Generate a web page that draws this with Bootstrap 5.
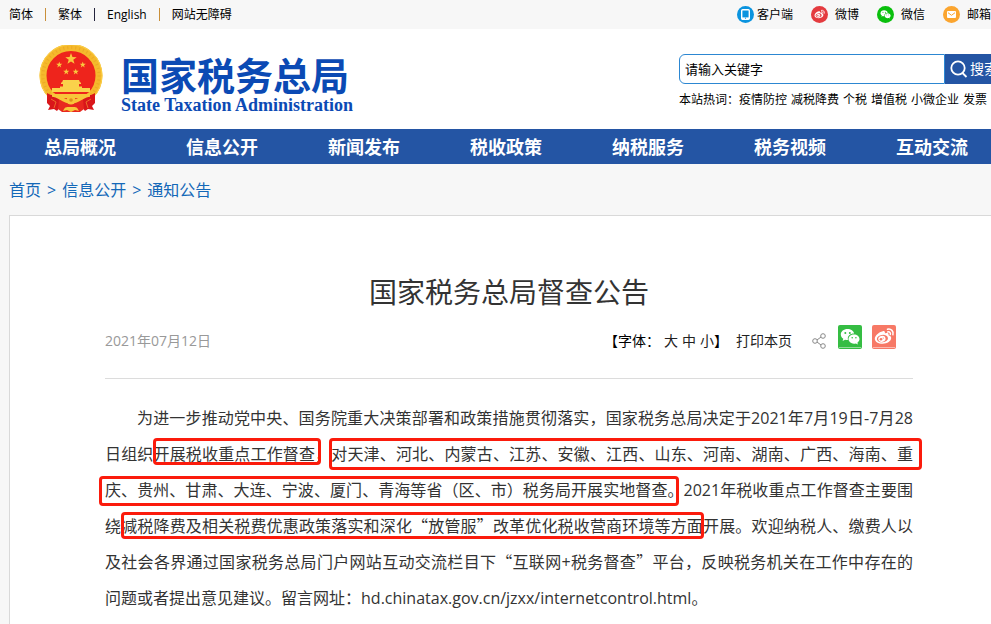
<!DOCTYPE html>
<html lang="zh-CN">
<head>
<meta charset="utf-8">
<meta name="viewport" content="width=device-width, initial-scale=1">
<title>国家税务总局督查公告</title>
<link href="https://cdn.jsdelivr.net/npm/bootstrap@5.3.0/dist/css/bootstrap.min.css" rel="stylesheet">
<style>
  body { font-family: "Open Sans", "Noto Sans CJK SC", sans-serif; background: #f7f7f7; color: #333; overflow-x: hidden; }
  a { color: inherit; text-decoration: none; }
  .shell { width: calc(100% - 18px); min-width: 1000px; max-width: 1000px; margin-left: 9px; }
  @media (min-width: 1020px) { .shell { margin-left: auto; margin-right: auto; } }
  .util { font-size: 12px; line-height: 29px; color: #000; }
  .util-links { gap: 12px; }
  .bar { width: 1px; height: 13px; background: #c98f3a; }
  .bar-dark { background: #23233c; }
  .util-apps { gap: 18px; padding-right: 18px; }
  .util-apps a { gap: 7px; }
  .util-apps a:first-child { gap: 3px; }
  .masthead { height: 100px; }
  .brand { padding-left: 29px; gap: 17px; color: #0b4ab4; }
  .brand-text { padding-top: 26px; }
  .brand-zh { font-size: 38px; font-weight: 700; line-height: 40px; }
  .brand-en { font-family: "Liberation Serif", serif; font-size: 18px; font-weight: 700; line-height: 20px; }
  .finder { width: 330px; padding-top: 25px; }
  .finder .form-control { height: 30px; padding: 0 5px 2px; font-size: 13px; color: #000; border: 1px solid #2c87d2; border-radius: 6px 0 0 6px; }
  .finder .btn { width: 64px; height: 30px; padding: 0 5px; gap: 2px; font-size: 14px; line-height: 28px; color: #fff; background: #2455a4; border: 0; border-radius: 0 6px 6px 0; }
  .hot { font-size: 12px; line-height: 18px; color: #000; margin-top: 7px; }
  .mainnav { background: #2455a4; }
  .mainnav .nav-link { padding: 1px 35px 0; font-size: 18px; font-weight: 700; line-height: 34px; color: #fff; }
  .crumbs { gap: 6px; padding: 14px 0 13px; font-size: 16px; line-height: 24px; color: #1468b8; }
  .sheet { background: #fff; border: 1px solid #d9d9d9; border-bottom: 0; padding: 55px 95px 8px; }
  .sheet h1 { font-size: 28px; font-weight: 400; line-height: 42px; }
  .meta { font-size: 14px; line-height: 24px; padding: 12px 17px 25px 0; border-bottom: 1px solid #dcdcdc; }
  .meta .date { color: #999; }
  .tools { color: #000; }
  .tools button { padding: 0; border: 0; background: none; color: #222; line-height: 24px; }
  .share-row { gap: 10px; }
  .copy { font-size: 16px; line-height: 36px; text-align: justify; margin-top: 21px; }
  .copy p { text-indent: 32px; }
  .q { font-family: "Noto Sans CJK SC", sans-serif; line-height: 1; }
  .colon { font-family: "Noto Sans CJK TC", sans-serif; line-height: 1; }
  .frame { position: absolute; border: 3px solid #fb1b0c; border-radius: 4px; pointer-events: none; }
  .f1 { left: 48px; top: 38px; width: 168px; height: 27px; }
  .f2 { left: 224px; top: 38px; width: 593px; height: 32px; }
  .f3 { left: -6px; top: 76px; width: 580px; height: 30px; }
  .f4 { left: 16px; top: 112px; width: 583px; height: 27px; }
</style>
</head>
<body>
<svg width="0" height="0" class="position-absolute" aria-hidden="true">
  <symbol id="wechat" viewBox="0 0 24 24">
    <path fill="#fff" d="M9.500 4C5.700 4 2.800 6.400 2.800 9.500c0 1.800 1 3.300 2.500 4.300l-.7 2.200 2.500-1.300c.9.300 1.600.3 2.400.3h.5a5 5 0 0 1-.2-1.300c0-2.900 2.700-5.100 5.900-5.100h.5C15.700 5.900 12.900 4 9.500 4z"/>
    <path fill="#fff" d="M21.500 14.100c0-2.600-2.500-4.600-5.500-4.600s-5.500 2-5.500 4.600 2.500 4.600 5.500 4.600c.7 0 1.300-.1 1.900-.3l2 1.200-.5-1.900c1.300-.9 2.100-2.100 2.100-3.600z"/>
    <g fill="var(--hole)"><circle cx="7.300" cy="7.900" r="1"/><circle cx="11.800" cy="7.900" r="1"/><circle cx="14.200" cy="12.700" r=".8"/><circle cx="17.900" cy="12.700" r=".8"/></g>
  </symbol>
  <symbol id="weibo" viewBox="0 0 24 24">
    <path fill="#fff" d="M10.800 6.200c1.300-.4 2.500.1 2.100 2.300 2-.7 4-.6 3.700 1.700 1.500.5 2.600 1.300 2.600 2.900 0 3-3.800 5.700-8.500 5.700-4.400 0-7.900-2-7.900-5.100 0-3 4-6.700 8-7.500z"/>
    <ellipse cx="10.400" cy="13.600" rx="5.600" ry="3.700" fill="var(--hole)" transform="rotate(-7 10.400 13.600)"/>
    <ellipse cx="9.900" cy="13.900" rx="3.700" ry="2.900" fill="#fff" transform="rotate(-15 9.900 13.900)"/>
    <circle cx="9" cy="14.300" r="1.300" fill="var(--hole)"/><circle cx="11.200" cy="13.100" r=".6" fill="var(--hole)"/>
    <path d="M15.500 4.300c3.500-.9 6.500 2 5.400 5.500M15.700 6.900c1.900-.4 3.200.9 2.600 2.700" fill="none" stroke="#fff" stroke-width="1.500" stroke-linecap="round"/>
  </symbol>
  <symbol id="star" viewBox="-10 -10 20 20"><path fill="#f9c83e" d="M0-10 2.400-3.200 9.500-3.100 3.800 1.200 5.900 8.100 0 4-5.900 8.100-3.800 1.200-9.500-3.100-2.400-3.200z"/></symbol>
</svg>

<div class="util"><div class="shell d-flex justify-content-between">
  <div class="util-links d-flex align-items-center">
    <a href="#">简体</a><span class="bar"></span><a href="#">繁体</a><span class="bar bar-dark"></span><a href="#">English</a><span class="bar"></span><a href="#">网站无障碍</a>
  </div>
  <div class="util-apps d-flex text-nowrap">
    <a href="#" class="d-flex align-items-center"><svg width="17" height="17" viewBox="0 0 17 17"><circle cx="8.500" cy="8.500" r="8.500" fill="#0b94df"/><rect x="4.700" y="3.700" width="7.600" height="9.600" rx="1" fill="none" stroke="#fff" stroke-width="1.400"/><path d="M5 11.400h7v1.600H5z" fill="#fff"/><circle cx="8.500" cy="12.200" r=".6" fill="#0b94df"/></svg>客户端</a>
    <a href="#" class="d-flex align-items-center"><svg width="17" height="17" viewBox="0 0 17 17" style="--hole:#e43b3f"><circle cx="8.500" cy="8.500" r="8.500" fill="#e43b3f"/><use href="#weibo" x="2" y="2" width="13" height="13"/></svg>微博</a>
    <a href="#" class="d-flex align-items-center"><svg width="17" height="17" viewBox="0 0 17 17" style="--hole:#0abf0d"><circle cx="8.500" cy="8.500" r="8.500" fill="#0abf0d"/><use href="#wechat" x="2" y="2" width="13" height="13"/></svg>微信</a>
    <a href="#" class="d-flex align-items-center"><svg width="17" height="17" viewBox="0 0 17 17"><circle cx="8.500" cy="8.500" r="8.500" fill="#fba52f"/><rect x="4" y="5" width="9" height="7" rx="1" fill="#fff"/><path d="m5 6.700 3.500 2.600L12 6.700" fill="none" stroke="#fba52f"/></svg>邮箱</a>
  </div>
</div></div>

<header class="bg-white"><div class="shell masthead d-flex justify-content-between">
  <a href="#" class="brand d-flex">
    <svg class="mt-3" width="66" height="70" viewBox="0 1 66 70" role="img" aria-label="国徽">
      <circle cx="33" cy="31" r="28" fill="#ee241c"/>
      <circle cx="33" cy="31.500" r="28" fill="none" stroke="#f5b92c" stroke-width="7"/>
      <circle cx="33" cy="31.500" r="28" fill="none" stroke="#e39b1d" stroke-width="3" stroke-dasharray="1 3" opacity=".5"/>
      <circle cx="33" cy="31.500" r="31" fill="none" stroke="#fbd04a" stroke-width="1"/>
      <use href="#star" x="27" y="9" width="12" height="12"/>
      <use href="#star" x="18" y="17.500" width="6.500" height="6.500"/><use href="#star" x="41.500" y="17.500" width="6.500" height="6.500"/>
      <use href="#star" x="25" y="24.500" width="6.500" height="6.500"/><use href="#star" x="34.500" y="24.500" width="6.500" height="6.500"/>
      <path fill="#fad24b" d="M25 36h16l1 2.500h1V40h-2v2.500h3V44h8v4H14v-4h8v-1.500h3V40h-2v-1.500h1z"/>
      <path fill="#f8c63a" d="M11 50h44l-3 4H14z"/>
      <path fill="#d9161a" d="M9 49c5 3 9 2 14 5l-2 5 1 4-3 4-3-2-6 1 2-4-3-3zM57 49c-5 3-9 2-14 5l2 5-1 4 3 4 3-2 6 1-2-4 3-3z"/>
      <path fill="#e8281f" d="M21 55h24l1 10-4 3H24l-4-3z"/>
      <path fill="none" stroke="#f8c63a" stroke-width="3.500" d="M14 51c7 0 11 7 19 7s12-7 19-7"/>
      <circle cx="33" cy="56" r="4.500" fill="#f8c63a"/><circle cx="33" cy="56" r="1.800" fill="#dd931b"/>
      <path fill="#f8c63a" d="M25 67c2-5 4-4 8-4s6-1 8 4l-4-1-4 2-4-2z"/>
      <path fill="none" stroke="#f0832c" stroke-width=".8" d="m13 55 5 3-2 6M53 55l-5 3 2 6"/>
    </svg>
    <span class="brand-text d-flex flex-column"><span class="brand-zh">国家税务总局</span><span class="brand-en">State Taxation Administration</span></span>
  </a>
  <div class="finder">
    <form class="d-flex">
      <input class="form-control" type="text" value="请输入关键字" aria-label="请输入关键字">
      <button class="btn d-flex align-items-center flex-shrink-0" type="button"><svg width="18" height="18" viewBox="0 0 18 18" fill="none" stroke="#fff" stroke-width="1.800"><circle cx="8" cy="8" r="6.700"/><path d="m12.500 13 4 4"/></svg>搜索</button>
    </form>
    <div class="hot d-flex text-nowrap"><span>本站热词<span class="colon">：</span></span><div class="d-flex gap-1"><a href="#">疫情防控</a><a href="#">减税降费</a><a href="#">个税</a><a href="#">增值税</a><a href="#">小微企业</a><a href="#">发票</a></div></div>
  </div>
</div></header>

<nav class="mainnav" aria-label="主导航"><div class="shell nav flex-nowrap text-nowrap">
  <a class="nav-link" href="#">总局概况</a><a class="nav-link" href="#">信息公开</a><a class="nav-link" href="#">新闻发布</a><a class="nav-link" href="#">税收政策</a><a class="nav-link" href="#">纳税服务</a><a class="nav-link" href="#">税务视频</a><a class="nav-link" href="#">互动交流</a>
</div></nav>

<nav class="shell crumbs d-flex" aria-label="当前位置"><a href="#">首页</a><span>&gt;</span><a href="#">信息公开</a><span>&gt;</span><a href="#">通知公告</a></nav>

<main class="shell sheet">
  <h1 class="text-center mb-0">国家税务总局督查公告</h1>
  <div class="meta d-flex justify-content-between align-items-end">
    <span class="date">2021年07月12日</span>
    <div class="tools d-flex align-items-end">
      <span>【字体<span class="colon">：</span></span>
      <span class="d-flex gap-1 ms-1"><button type="button">大</button><button type="button">中</button><button type="button">小</button></span><span>】</span>
      <button type="button" class="ms-2">打印本页</button>
      <a href="#" class="d-flex ms-3 me-2 ps-1 pe-1 pb-1" aria-label="分享"><svg width="14" height="16" viewBox="0 0 14 16" fill="none" stroke="#888"><circle cx="3" cy="8" r="2.300"/><circle cx="11" cy="3" r="2.300"/><circle cx="11" cy="13" r="2.300"/><path d="m5 7 4-3M5 9l4 3"/></svg></a>
      <span class="share-row d-flex mb-1">
      <a href="#" class="d-flex" aria-label="微信"><svg width="24" height="24" viewBox="0 0 24 24" style="--hole:#35bd43"><rect width="24" height="24" rx="2" fill="#35bd43"/><path d="M1 22.500h22" stroke="#93dc99"/><use href="#wechat" width="24" height="24"/></svg></a>
      <a href="#" class="d-flex" aria-label="微博"><svg width="24" height="24" viewBox="0 0 24 24" style="--hole:#f77966"><rect width="24" height="24" rx="2" fill="#f77966"/><path d="M1 22.500h22" stroke="#fbb9af"/><use href="#weibo" width="24" height="24"/></svg></a>
      </span>
    </div>
  </div>
  <article class="copy position-relative">
    <p class="mb-0">为进一步推动党中央、国务院重大决策部署和政策措施贯彻落实，国家税务总局决定于2021年7月19日-7月28日组织开展税收重点工作督查，对天津、河北、内蒙古、江苏、安徽、江西、山东、河南、湖南、广西、海南、重庆、贵州、甘肃、大连、宁波、厦门、青海等省（区、市）税务局开展实地督查。2021年税收重点工作督查主要围绕减税降费及相关税费优惠政策落实和深化<span class="q">“</span>放管服<span class="q">”</span>改革优化税收营商环境等方面开展。欢迎纳税人、缴费人以及社会各界通过国家税务总局门户网站互动交流栏目下<span class="q">“</span>互联网+税务督查<span class="q">”</span>平台，反映税务机关在工作中存在的问题或者提出意见建议。留言网址<span class="colon">：</span>hd.chinatax.gov.cn/jzxx/internetcontrol.html。</p>
    <span class="frame f1"></span><span class="frame f2"></span><span class="frame f3"></span><span class="frame f4"></span>
  </article>
</main>
<script src="https://cdn.jsdelivr.net/npm/bootstrap@5.3.0/dist/js/bootstrap.bundle.min.js"></script>
</body>
</html>
